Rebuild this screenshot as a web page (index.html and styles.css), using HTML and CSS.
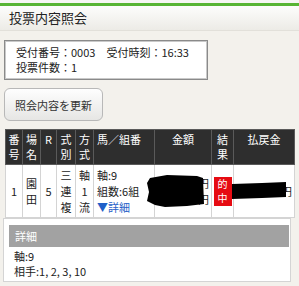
FILE: index.html
```html
<!DOCTYPE html>
<html lang="ja">
<head>
  <meta charset="utf-8">
  <title>投票内容照会</title>
  <link rel="stylesheet" href="styles.css">
</head>
<body>
  <div class="topline"></div>
  <header class="titlebar">投票内容照会</header>

  <main class="main">
    <div class="infobox">
      <div>受付番号：0003　受付時刻：16:33</div>
      <div>投票件数：1</div>
    </div>

    <button class="refresh">照会内容を更新</button>

    <table class="bets">
      <colgroup>
        <col style="width:17px">
        <col style="width:18px">
        <col style="width:16px">
        <col style="width:19px">
        <col style="width:18px">
        <col style="width:61px">
        <col style="width:57px">
        <col style="width:22px">
        <col style="width:61px">
      </colgroup>
      <thead>
        <tr>
          <th>番<br>号</th>
          <th>場<br>名</th>
          <th>R</th>
          <th>式<br>別</th>
          <th>方<br>式</th>
          <th class="left">馬／組番</th>
          <th>金額</th>
          <th>結<br>果</th>
          <th>払戻金</th>
        </tr>
      </thead>
      <tbody>
        <tr>
          <td>1</td>
          <td>園<br>田</td>
          <td>5</td>
          <td>三<br>連<br>複</td>
          <td>軸<br>1<br>流</td>
          <td class="left">
            <div>軸:9</div>
            <div>組数:6組</div>
            <div class="more">▼詳細</div>
          </td>
          <td class="money">
            <div>円</div>
            <div>円</div>
            <svg class="blot blot-amount" viewBox="0 0 57 33">
              <polygon points="3,4 20,1 50,2 56,4 57,30 40,32 18,33 8,31 0,27 2,18 0,9"/>
            </svg>
          </td>
          <td><span class="hit">的<br>中</span></td>
          <td class="money">
            <div>円</div>
            <svg class="blot blot-payout" viewBox="0 0 54 17">
              <polygon points="0,2 30,1 54,0 54,15 30,16 0,17"/>
            </svg>
          </td>
        </tr>
      </tbody>
    </table>

    <section class="detail">
      <div class="detail-head">詳細</div>
      <div class="detail-body">
        <div>軸:9</div>
        <div>相手:1, 2, 3, 10</div>
      </div>
    </section>
  </main>
</body>
</html>
```

FILE: styles.css
```css
* {
  box-sizing: border-box;
}

body {
  margin: 0;
  padding: 0;
  background-color: #f3f1ec;
  color: #222;
  font-family: "Noto Sans CJK JP", "Noto Sans", sans-serif;
  font-size: 11px;
}

.topline {
  height: 6px;
  background-color: #f6f6f4;
  border-bottom: 3px solid #58b535;
}

.titlebar {
  height: 25px;
  line-height: 24px;
  padding-left: 9px;
  font-size: 13px;
  color: #222;
  background: linear-gradient(#fdfdfc, #ecebe6);
  border-bottom: 1px solid #e2e0da;
}

.main {
  padding: 0 4px;
}

.infobox {
  width: 204px;
  height: 40px;
  margin-top: 9px;
  padding: 4px 0 0 11px;
  line-height: 15px;
  background-color: #fff;
  border: 1px solid #8a8a8a;
  box-shadow: inset 0 0 0 1px #c9c9c9;
}

.refresh {
  display: block;
  width: 99px;
  height: 33px;
  margin-top: 8px;
  padding: 0;
  font-family: inherit;
  font-size: 11px;
  color: #333;
  background: linear-gradient(#fefefe, #e6e6e4);
  border: 1px solid #b8b8b8;
  border-radius: 6px;
}

.bets {
  table-layout: fixed;
  width: 289px;
  margin: 8px 0 0 1px;
  border-collapse: collapse;
  background-color: #fff;
}

.bets th {
  height: 35px;
  padding: 2px 0 0;
  vertical-align: top;
  font-weight: normal;
  line-height: 15px;
  color: #fff;
  background-color: #2e2e2e;
  border: 1px solid #5a5a5a;
  text-align: center;
}

.bets td {
  height: 53px;
  padding: 0;
  line-height: 16px;
  text-align: center;
  border: 1px solid #d4d4d4;
}

.bets .left {
  text-align: left;
  padding-left: 3px;
}

.more {
  color: #1f5fc8;
}

.money {
  position: relative;
  text-align: right !important;
  padding-right: 2px !important;
}

.blot {
  position: absolute;
  fill: #000;
}

.blot-amount {
  left: -8px;
  top: 9px;
  width: 57px;
  height: 33px;
}

.blot-payout {
  left: -2px;
  top: 17px;
  width: 54px;
  height: 17px;
}

.hit {
  display: inline-block;
  width: 18px;
  font-size: 10px;
  line-height: 14.5px;
  color: #fff;
  background-color: #e60b12;
}

.detail {
  width: 288px;
  height: 64px;
  margin: 0 0 0 -1px;
  padding: 6px 1px 0 5px;
  background-color: #fff;
  border: 1px solid #d4d4d4;
}

.detail-head {
  height: 22px;
  line-height: 22px;
  padding-left: 6px;
  color: #fff;
  background-color: #a2a2a2;
}

.detail-body {
  padding: 2px 0 0 5px;
  line-height: 15px;
}
```
